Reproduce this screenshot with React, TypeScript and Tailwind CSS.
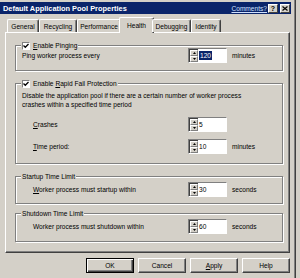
import React from "react";

const TABS = [
  { label: "General", w: "w-[32px]" },
  { label: "Recycling", w: "w-[38px]" },
  { label: "Performance", w: "w-[44px]" },
  { label: "Health", w: "w-[35px]", active: true },
  { label: "Debugging", w: "w-[39px]" },
  { label: "Identity", w: "w-[30px]" },
];

const Arrow = ({ up }: { up?: boolean }) => (
  <svg width="3" height="2" viewBox="0 0 3 2" className="block">
    <path d={up ? "M1.5 0L3 2H0z" : "M0 0h3L1.5 2z"} fill="#000" />
  </svg>
);

const SpinHalf = ({ up }: { up?: boolean }) => (
  <div className="flex-1 flex items-center justify-center bg-[#d4d0c8] border-t border-l border-white border-r border-b border-r-[#808080] border-b-[#808080]">
    <Arrow up={up} />
  </div>
);

const Spin = ({ value, selected }: { value: string; selected?: boolean }) => (
  <div className="flex w-[39px] h-[15px] border-t border-l border-[#808080] border-r border-b border-r-white border-b-white shadow-[inset_1px_1px_0_#404040]">
    <div className="flex flex-col w-[9px] pt-[1px] pl-[1px]">
      <SpinHalf up />
      <SpinHalf />
    </div>
    <div className="flex-1 bg-white flex items-center pl-[1px]">
      {selected ? (
        <span className="bg-[#0a246a] text-white px-[1px] leading-[9px]">{value}</span>
      ) : (
        <span className="leading-[9px]">{value}</span>
      )}
    </div>
  </div>
);

const CheckBox = () => (
  <div className="w-[8px] h-[8px] bg-white border-t border-l border-[#808080] border-r border-b border-r-white border-b-white flex items-center justify-center">
    <svg width="6" height="6" viewBox="0 0 6 6" className="block">
      <path d="M0.5 2.5L2.3 4.3L5.5 1" stroke="#000" strokeWidth="1.3" fill="none" />
    </svg>
  </div>
);

// etched frame with a caption sitting on the top line
const Group = ({
  legend,
  check,
  className,
  children,
}: {
  legend: React.ReactNode;
  check?: boolean;
  className: string;
  children: React.ReactNode;
}) => (
  <div className={`relative w-[268px] border border-[#808080] shadow-[inset_1px_1px_0_#fff,1px_1px_0_#fff] ${className}`}>
    <div className="absolute -top-[5px] left-[5px] h-[9px] flex items-center bg-[#d4d0c8] px-[1px] whitespace-nowrap leading-[9px]">
      {check && (
        <>
          <CheckBox />
          <span className="w-[3px]" />
        </>
      )}
      {legend}
    </div>
    {children}
  </div>
);

const Row = ({
  label,
  value,
  unit,
  selected,
  indent,
}: {
  label: React.ReactNode;
  value: string;
  unit?: string;
  selected?: boolean;
  indent?: boolean;
}) => (
  <div className={`flex items-center h-[15px] ${indent ? "pl-[17px]" : "pl-[6px]"}`}>
    <span className={`${indent ? "w-[155px]" : "w-[166px]"} whitespace-nowrap leading-[9px]`}>{label}</span>
    <Spin value={value} selected={selected} />
    {unit && <span className="ml-[5px] leading-[9px]">{unit}</span>}
  </div>
);

const Button = ({ children, primary }: { children: React.ReactNode; primary?: boolean }) => (
  <div
    className={`w-[48px] h-[15px] flex items-center justify-center bg-[#d4d0c8] leading-[9px] ${
      primary
        ? "border border-black shadow-[inset_1px_1px_0_#fff,inset_-1px_-1px_0_#404040,inset_-2px_-2px_0_#808080]"
        : "border-t border-l border-white border-r border-b border-r-[#404040] border-b-[#404040] shadow-[inset_-1px_-1px_0_#808080]"
    }`}
  >
    {children}
  </div>
);

export default function App() {
  return (
    <div className="w-[300px] h-[278px] bg-[#d4d0c8] overflow-hidden text-black text-[6.6px] font-['Liberation_Sans',Arial,sans-serif]">
      <div className="w-[296px] h-full border-r border-[#404040] shadow-[inset_-1px_0_0_#808080] pt-[2px]">
        {/* title bar */}
        <div className="w-[291px] h-[12px] bg-[#0a246a] flex items-center pl-[3px] pr-[1px]">
          <span className="font-bold text-white text-[7.4px] leading-[9px] whitespace-nowrap">
            Default Application Pool Properties
          </span>
          <span className="ml-auto mr-[1px] text-[#cfe0ff] underline leading-[9px]">Comments?</span>
          <div className="w-[10px] h-[9px] bg-[#d4d0c8] border-t border-l border-white border-r border-b border-r-[#404040] border-b-[#404040] flex items-center justify-center font-bold text-[7px] leading-[7px]">
            ?
          </div>
          <div className="ml-[2px] w-[10px] h-[9px] bg-[#d4d0c8] border-t border-l border-white border-r border-b border-r-[#404040] border-b-[#404040] flex items-center justify-center">
            <svg width="6" height="5" viewBox="0 0 6 5" className="block">
              <path d="M0.5 0.5L5.5 4.5M5.5 0.5L0.5 4.5" stroke="#000" strokeWidth="1.2" />
            </svg>
          </div>
        </div>

        {/* tabs */}
        <div className="mt-[3px] ml-[5px] pl-[2px] h-[15px] flex items-end relative z-10">
          {TABS.map((t) =>
            t.active ? (
              <div
                key={t.label}
                className={`${t.w} -mx-[2px] h-[16px] -mb-[1px] bg-[#d4d0c8] border-t border-l border-white border-r border-r-[#404040] rounded-t-[2px] shadow-[inset_-1px_0_0_#808080] flex items-center justify-center pb-[1px] leading-[9px]`}
              >
                {t.label}
              </div>
            ) : (
              <div
                key={t.label}
                className={`${t.w} h-[13px] bg-[#d4d0c8] border-t border-l border-white border-r border-r-[#404040] rounded-t-[2px] shadow-[inset_-1px_0_0_#808080] flex items-center justify-center leading-[9px]`}
              >
                {t.label}
              </div>
            )
          )}
        </div>

        {/* tab page */}
        <div className="ml-[5px] w-[285px] h-[221px] border-t border-l border-white border-r border-b border-r-[#404040] border-b-[#404040] shadow-[inset_-1px_-1px_0_#808080] pl-[9px] flex flex-col">
          <Group
            check
            className="mt-[12px] h-[26px] pt-[2px]"
            legend={
              <span>
                <u>E</u>nable Pinging
              </span>
            }
          >
            <Row label="Ping worker process every" value="120" unit="minutes" selected />
          </Group>

          <Group
            check
            className="mt-[12px] h-[81px] pt-[7px]"
            legend={
              <span>
                Enable <u>R</u>apid Fail Protection
              </span>
            }
          >
            <div className="pl-[6px] leading-[9px] whitespace-nowrap">
              <div>Disable the application pool if there are a certain number of worker process</div>
              <div>crashes within a specified time period</div>
            </div>
            <div className="mt-[8px]">
              <Row
                indent
                label={
                  <span>
                    <u>C</u>rashes
                  </span>
                }
                value="5"
              />
            </div>
            <div className="mt-[7px]">
              <Row
                indent
                label={
                  <span>
                    <u>T</u>ime period:
                  </span>
                }
                value="10"
                unit="minutes"
              />
            </div>
          </Group>

          <Group className="mt-[12px] h-[28px] pt-[5px]" legend="Startup Time Limit">
            <Row
              indent
              label={
                <span>
                  <u>W</u>orker process must startup within
                </span>
              }
              value="30"
              unit="seconds"
            />
          </Group>

          <Group className="mt-[9px] h-[29px] pt-[5px]" legend="Shutdown Time Limit">
            <Row indent label="Worker process must shutdown within" value="60" unit="seconds" />
          </Group>
        </div>

        {/* dialog buttons */}
        <div className="ml-[5px] w-[285px] mt-[5px] flex justify-end gap-[4px]">
          <Button primary>OK</Button>
          <Button>Cancel</Button>
          <Button>
            <span>
              <u>A</u>pply
            </span>
          </Button>
          <Button>Help</Button>
        </div>
      </div>
    </div>
  );
}
